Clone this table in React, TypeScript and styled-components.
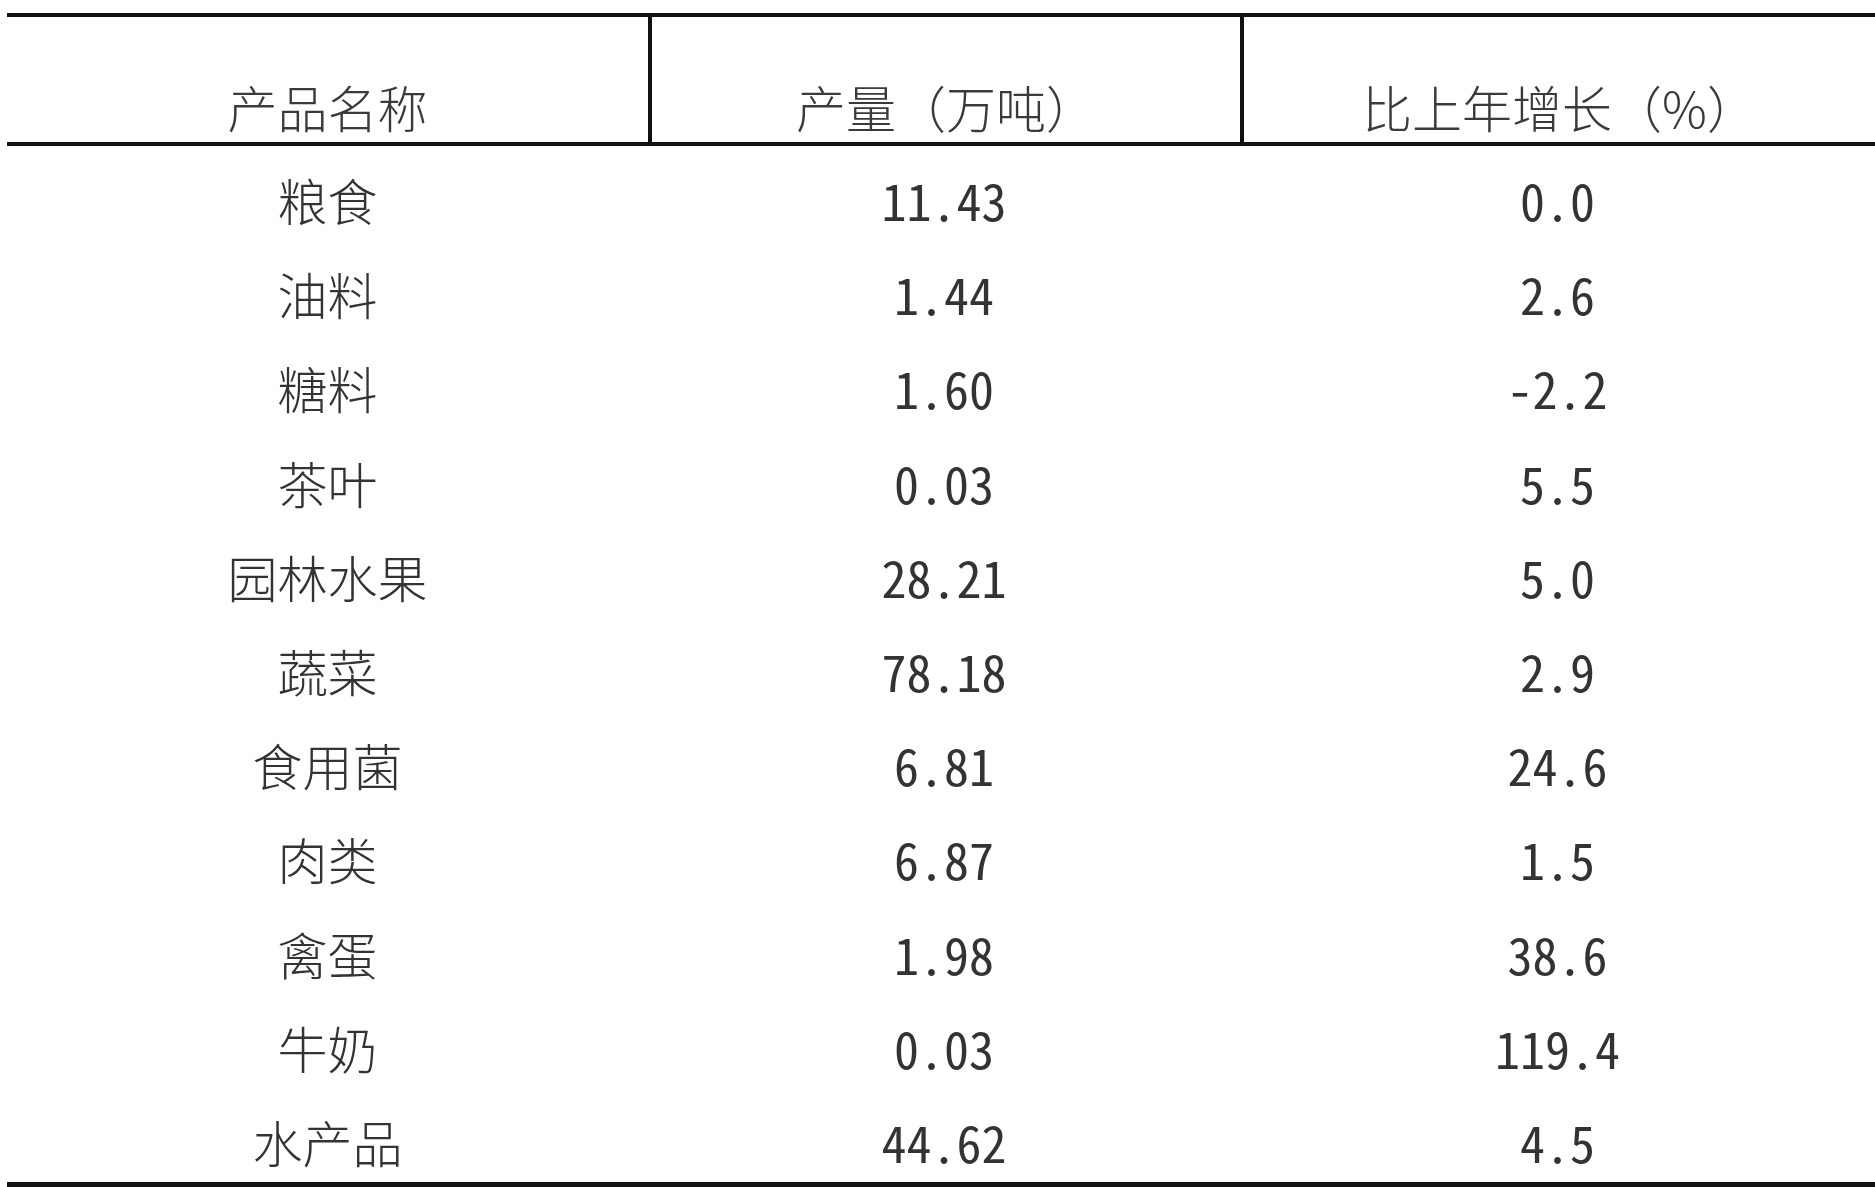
import React from "react";
import styled, { createGlobalStyle } from "styled-components";

const GlobalStyle = createGlobalStyle`
  html, body { margin: 0; padding: 0; background: #ffffff; }
  body { font-family: "Noto Sans CJK SC", "Noto Sans", sans-serif; color: #333333; }
`;

const Page = styled.div`
  width: 1875px;
  height: 1187px;
  box-sizing: border-box;
  padding: 13px 0 0 7px;
  background: #ffffff;
  overflow: hidden;
`;

const Table = styled.div`
  display: grid;
  grid-template-columns: 641px 592px 1fr;
  border-top: 4px solid #111111;
  border-bottom: 5px solid #111111;
`;

const HeadCell = styled.div<{ $divider?: boolean }>`
  height: 129px;
  box-sizing: border-box;
  display: flex;
  align-items: flex-end;
  justify-content: center;
  padding-bottom: 6px;
  border-bottom: 4px solid #111111;
  border-left: ${(p) => (p.$divider ? "4px solid #111111" : "none")};
  font-family: "Noto Sans CJK SC", sans-serif;
  font-weight: 300;
  font-size: 50px;
  line-height: 60px;
  color: #3a3a3a;
`;

const Cell = styled.div<{ $num?: boolean }>`
  height: 94.2px;
  box-sizing: border-box;
  display: flex;
  justify-content: center;
  align-items: flex-start;
  padding-top: 23px;
  font-family: ${(p) =>
    p.$num
      ? '"Noto Sans Mono CJK SC", "Noto Sans CJK SC", "DejaVu Sans Mono", monospace'
      : '"Noto Sans CJK SC", sans-serif'};
  font-weight: ${(p) => (p.$num ? 400 : 300)};
  font-size: 50px;
  line-height: 60px;
  color: #333333;
`;

const rows: [string, string, string][] = [
  ["粮食", "11.43", "0.0"],
  ["油料", "1.44", "2.6"],
  ["糖料", "1.60", "-2.2"],
  ["茶叶", "0.03", "5.5"],
  ["园林水果", "28.21", "5.0"],
  ["蔬菜", "78.18", "2.9"],
  ["食用菌", "6.81", "24.6"],
  ["肉类", "6.87", "1.5"],
  ["禽蛋", "1.98", "38.6"],
  ["牛奶", "0.03", "119.4"],
  ["水产品", "44.62", "4.5"],
];

export default function App() {
  return (
    <>
      <GlobalStyle />
      <Page>
        <Table>
          <HeadCell>产品名称</HeadCell>
          <HeadCell $divider>产量（万吨）</HeadCell>
          <HeadCell $divider>比上年增长（%）</HeadCell>
          {rows.map(([name, out, growth]) => (
            <React.Fragment key={name}>
              <Cell>{name}</Cell>
              <Cell $num>{out}</Cell>
              <Cell $num>{growth}</Cell>
            </React.Fragment>
          ))}
        </Table>
      </Page>
    </>
  );
}
